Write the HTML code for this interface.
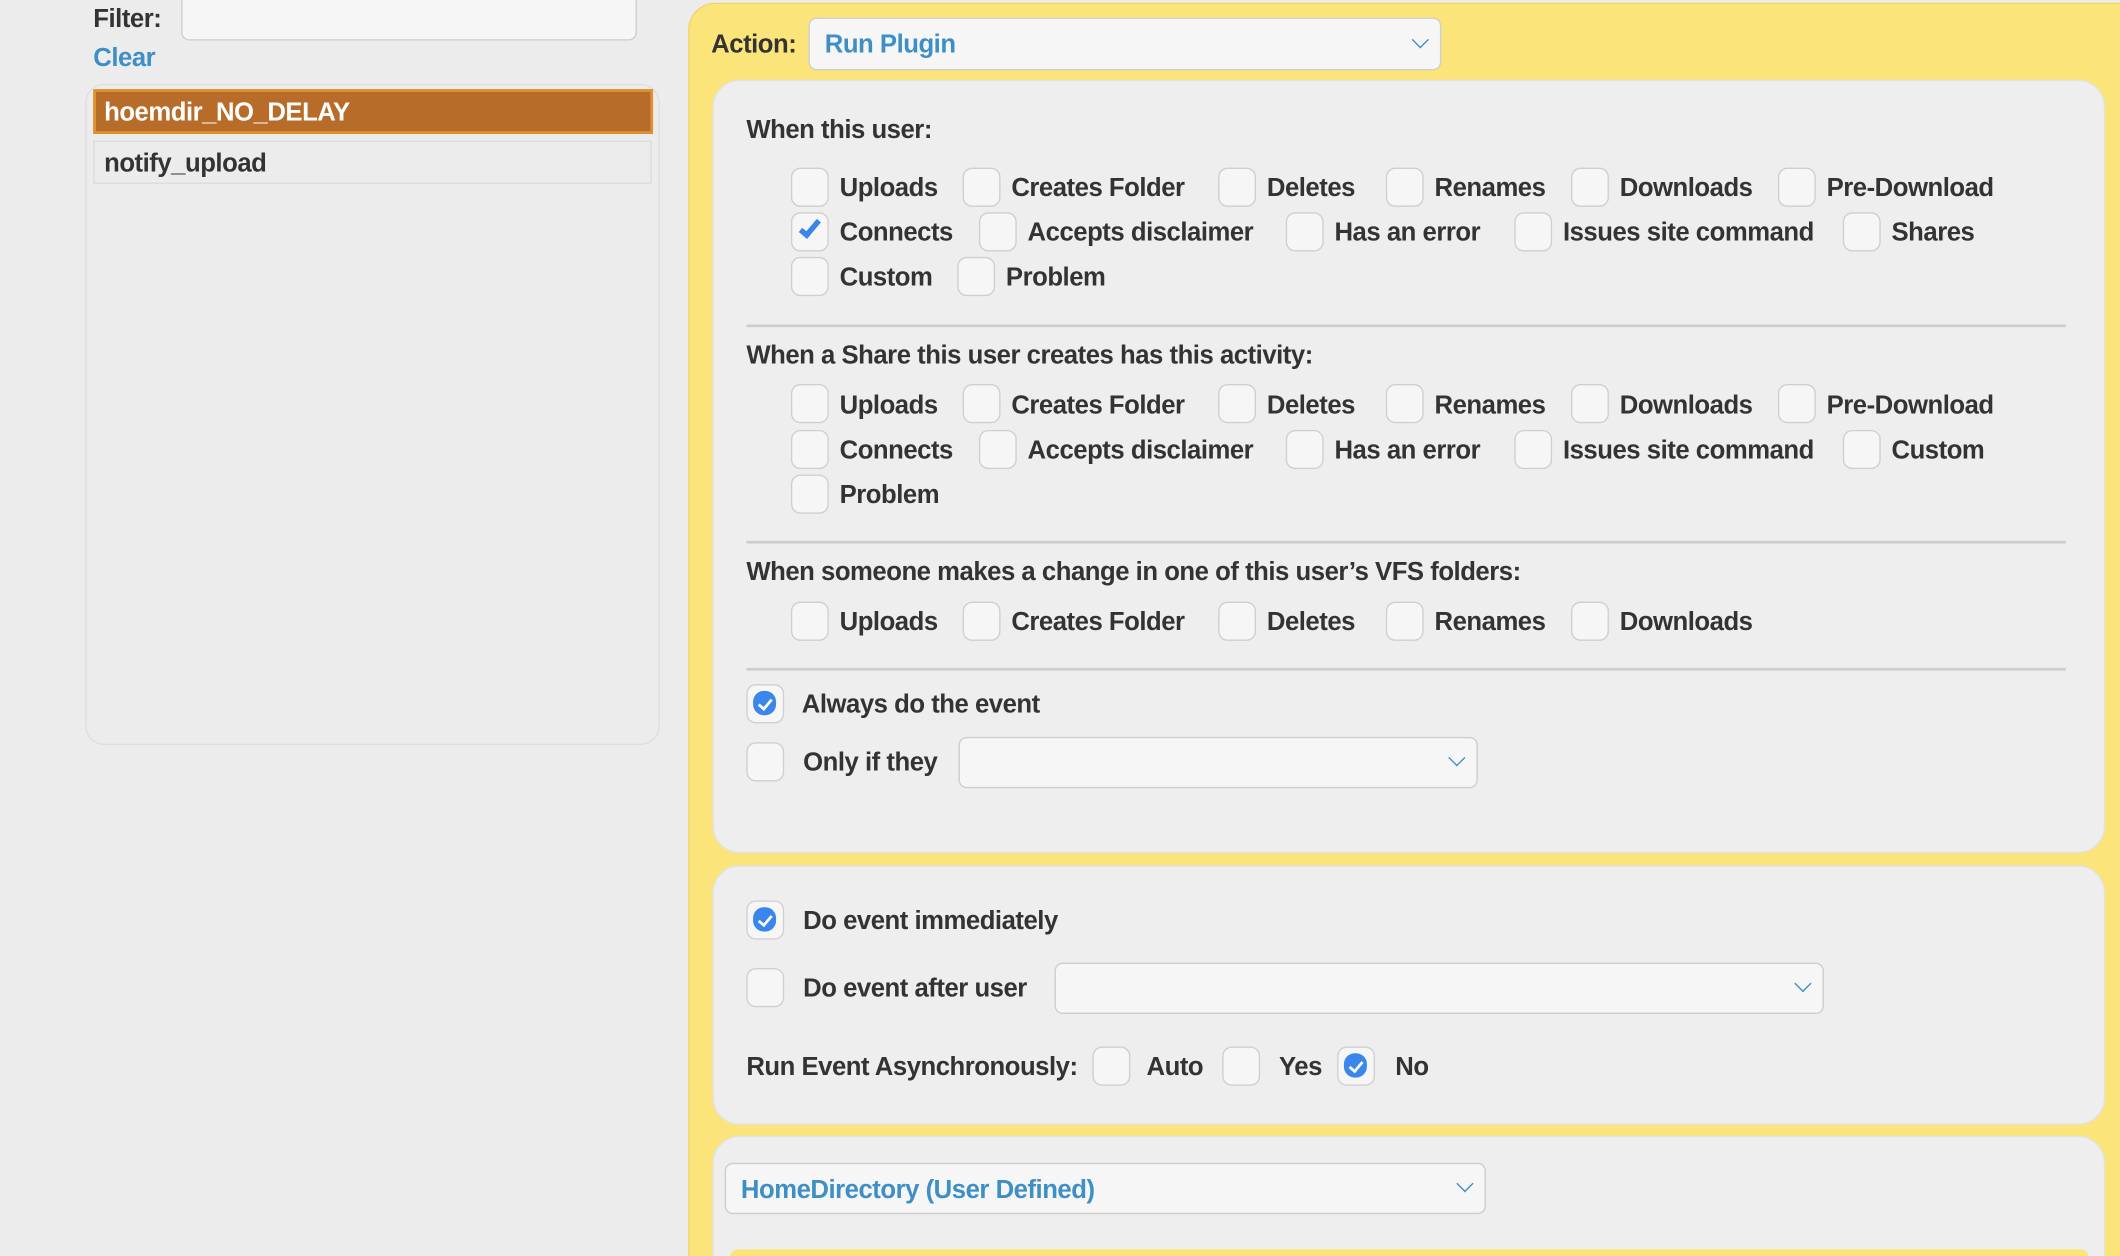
<!DOCTYPE html>
<html><head><meta charset="utf-8"><style>
html,body{margin:0;padding:0;width:2120px;height:1256px;overflow:hidden;background:#ececec}
#s{position:absolute;left:0;top:0;width:1568px;height:929px;overflow:hidden;transform:scale(1.35204);transform-origin:0 0;font-family:"Liberation Sans",sans-serif;color:#333;font-size:19px;font-weight:bold;letter-spacing:-0.35px}
#s div,#s span{position:absolute;box-sizing:border-box}
.t{line-height:24px;white-space:nowrap;margin-top:1.5px}
.cb{width:28px;height:29px;border:1.5px solid #cfcfcf;border-radius:7px;background:#f6f6f6}
.ck::after{content:"";position:absolute;left:4px;top:4px;width:17px;height:18px;border-radius:8px;background:#3a86ea}
.ck::before{content:"";position:absolute;left:10px;top:8px;width:4px;height:8px;border:solid #fff;border-width:0 2px 2px 0;transform:rotate(40deg);z-index:2}
.sel{background:#f6f6f6;border:1.5px solid #cdcdcd;border-radius:6px}
.chev{width:9px;height:9px;border:solid #3d8fc6;border-width:0 1.5px 1.5px 0;transform:rotate(45deg)}
.hr{height:1.5px;background:#cdcdcd}
.pn{background:#eeeeee;border:1px solid #e2e2e2;border-radius:20px}
</style></head><body><div id="s">
<div class="t" style="left:69px;top:1px">Filter:</div>
<div class="sel" style="left:134px;top:-6px;width:337px;height:36px;border-radius:6px"></div>
<div class="t" style="left:69px;top:30px;color:#3d8fc6">Clear</div>
<div style="left:63px;top:62px;width:425px;height:489px;border:1.5px solid #dedede;border-radius:14px;background:#ececec"></div>
<div style="left:69px;top:66px;width:414px;height:33px;background:#b86c29;border:2px solid #e0902f"></div>
<div class="t" style="left:77px;top:70px;color:#fff">hoemdir_NO_DELAY</div>
<div style="left:69px;top:104px;width:413px;height:32px;border:1.5px solid #dcdcdc"></div>
<div class="t" style="left:77px;top:108px">notify_upload</div>

<div style="left:509px;top:2px;width:1100px;height:1000px;background:#fbe57a;border-radius:20px;border:1px solid #eed56a"></div>
<div class="t" style="left:526px;top:20px">Action:</div>
<div class="sel" style="left:598px;top:13px;width:468px;height:39px"></div>
<div class="t" style="left:610px;top:20px;color:#3d8fc6">Run Plugin</div>
<div class="chev" style="left:1046px;top:25px"></div>

<div class="pn" style="left:527px;top:59px;width:1030px;height:572px"></div>
<div class="t" style="left:552px;top:83px">When this user:</div>
<div class="hr" style="left:552px;top:240px;width:976px"></div>
<div class="t" style="left:552px;top:250px">When a Share this user creates has this activity:</div>
<div class="hr" style="left:552px;top:400px;width:976px"></div>
<div class="t" style="left:552px;top:410px">When someone makes a change in one of this user’s VFS folders:</div>
<div class="hr" style="left:552px;top:494px;width:976px"></div>

<div class="cb" style="left:585px;top:124px"></div><div class="t" style="left:621px;top:126px">Uploads</div>
<div class="cb" style="left:712px;top:124px"></div><div class="t" style="left:748px;top:126px">Creates Folder</div>
<div class="cb" style="left:901px;top:124px"></div><div class="t" style="left:937px;top:126px">Deletes</div>
<div class="cb" style="left:1025px;top:124px"></div><div class="t" style="left:1061px;top:126px">Renames</div>
<div class="cb" style="left:1162px;top:124px"></div><div class="t" style="left:1198px;top:126px">Downloads</div>
<div class="cb" style="left:1315px;top:124px"></div><div class="t" style="left:1351px;top:126px">Pre-Download</div>

<div class="cb" style="left:585px;top:157px"><span style="left:9px;top:2px;width:8px;height:16px;border:solid #3a86ea;border-width:0 4px 4px 0;transform:rotate(40deg)"></span></div><div class="t" style="left:621px;top:159px">Connects</div>
<div class="cb" style="left:724px;top:157px"></div><div class="t" style="left:760px;top:159px">Accepts disclaimer</div>
<div class="cb" style="left:951px;top:157px"></div><div class="t" style="left:987px;top:159px">Has an error</div>
<div class="cb" style="left:1120px;top:157px"></div><div class="t" style="left:1156px;top:159px">Issues site command</div>
<div class="cb" style="left:1363px;top:157px"></div><div class="t" style="left:1399px;top:159px">Shares</div>

<div class="cb" style="left:585px;top:190px"></div><div class="t" style="left:621px;top:192px">Custom</div>
<div class="cb" style="left:708px;top:190px"></div><div class="t" style="left:744px;top:192px">Problem</div>

<div class="cb" style="left:585px;top:284px"></div><div class="t" style="left:621px;top:287px">Uploads</div>
<div class="cb" style="left:712px;top:284px"></div><div class="t" style="left:748px;top:287px">Creates Folder</div>
<div class="cb" style="left:901px;top:284px"></div><div class="t" style="left:937px;top:287px">Deletes</div>
<div class="cb" style="left:1025px;top:284px"></div><div class="t" style="left:1061px;top:287px">Renames</div>
<div class="cb" style="left:1162px;top:284px"></div><div class="t" style="left:1198px;top:287px">Downloads</div>
<div class="cb" style="left:1315px;top:284px"></div><div class="t" style="left:1351px;top:287px">Pre-Download</div>

<div class="cb" style="left:585px;top:318px"></div><div class="t" style="left:621px;top:320px">Connects</div>
<div class="cb" style="left:724px;top:318px"></div><div class="t" style="left:760px;top:320px">Accepts disclaimer</div>
<div class="cb" style="left:951px;top:318px"></div><div class="t" style="left:987px;top:320px">Has an error</div>
<div class="cb" style="left:1120px;top:318px"></div><div class="t" style="left:1156px;top:320px">Issues site command</div>
<div class="cb" style="left:1363px;top:318px"></div><div class="t" style="left:1399px;top:320px">Custom</div>
<div class="cb" style="left:585px;top:351px"></div><div class="t" style="left:621px;top:353px">Problem</div>

<div class="cb" style="left:585px;top:445px"></div><div class="t" style="left:621px;top:447px">Uploads</div>
<div class="cb" style="left:712px;top:445px"></div><div class="t" style="left:748px;top:447px">Creates Folder</div>
<div class="cb" style="left:901px;top:445px"></div><div class="t" style="left:937px;top:447px">Deletes</div>
<div class="cb" style="left:1025px;top:445px"></div><div class="t" style="left:1061px;top:447px">Renames</div>
<div class="cb" style="left:1162px;top:445px"></div><div class="t" style="left:1198px;top:447px">Downloads</div>

<div class="cb ck" style="left:552px;top:506px"></div><div class="t" style="left:593px;top:508px">Always do the event</div>
<div class="cb" style="left:552px;top:549px"></div><div class="t" style="left:594px;top:551px">Only if they</div>
<div class="sel" style="left:709px;top:545px;width:384px;height:38px"></div>
<div class="chev" style="left:1073px;top:556px"></div>

<div class="pn" style="left:527px;top:640px;width:1030px;height:192px"></div>
<div class="cb ck" style="left:552px;top:666px"></div><div class="t" style="left:594px;top:668px">Do event immediately</div>
<div class="cb" style="left:552px;top:716px"></div><div class="t" style="left:594px;top:718px">Do event after user</div>
<div class="sel" style="left:780px;top:712px;width:569px;height:38px"></div>
<div class="chev" style="left:1329px;top:723px"></div>
<div class="t" style="left:552px;top:776px">Run Event Asynchronously:</div>
<div class="cb" style="left:808px;top:774px"></div><div class="t" style="left:848px;top:776px">Auto</div>
<div class="cb" style="left:904px;top:774px"></div><div class="t" style="left:946px;top:776px">Yes</div>
<div class="cb ck" style="left:989px;top:774px"></div><div class="t" style="left:1032px;top:776px">No</div>

<div class="pn" style="left:527px;top:840px;width:1030px;height:200px"></div>
<div class="sel" style="left:536px;top:860px;width:563px;height:38px"></div>
<div class="t" style="left:548px;top:867px;color:#3d8fc6">HomeDirectory (User Defined)</div>
<div class="chev" style="left:1079px;top:871px"></div>
<div style="left:540px;top:924px;width:1005px;height:20px;background:#fbe57a;border-radius:6px"></div>
</div></body></html>
